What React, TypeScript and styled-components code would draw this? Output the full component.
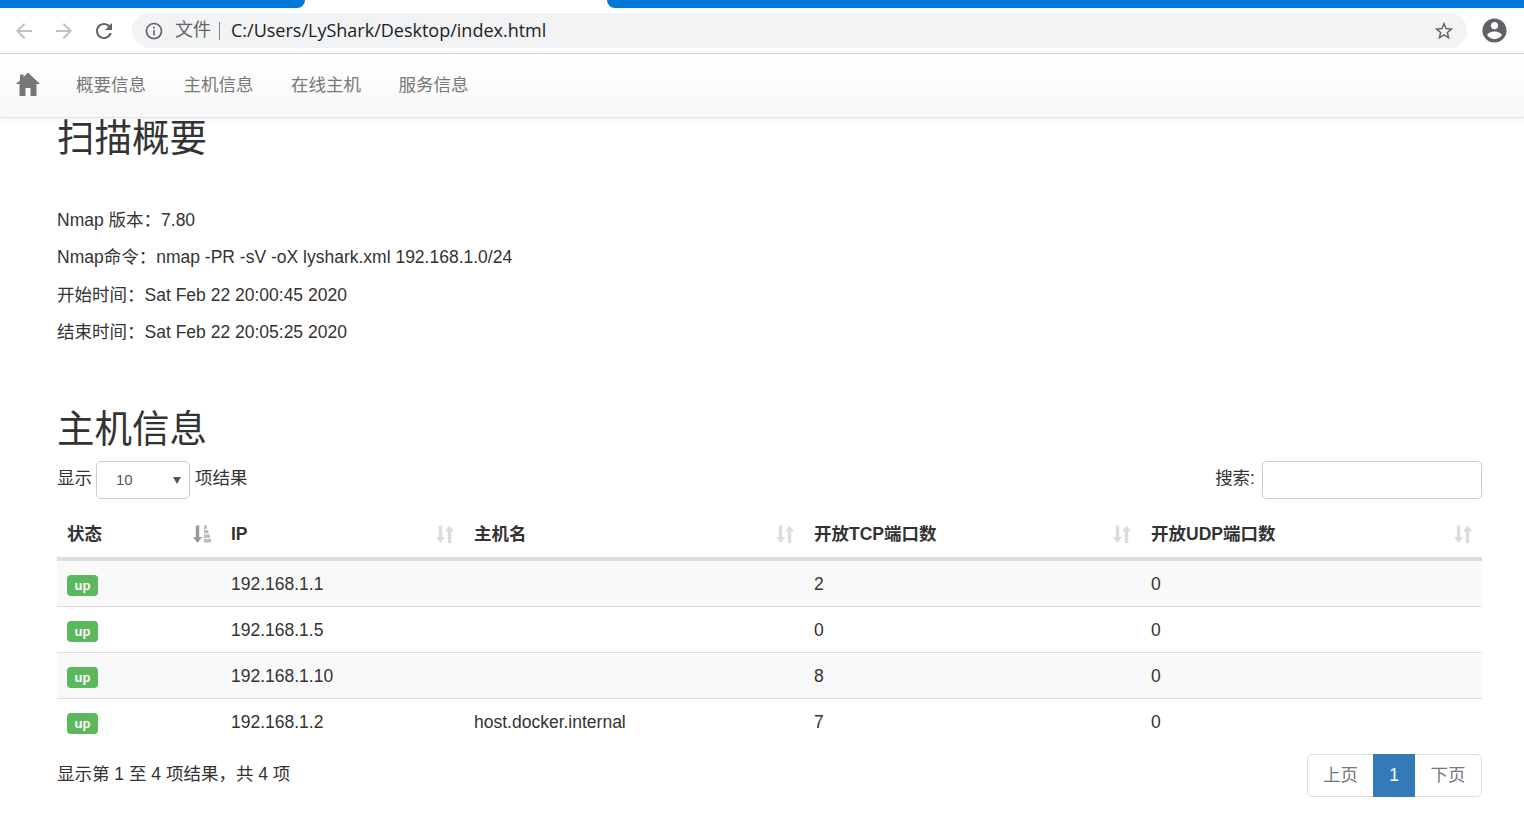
import React from "react";
import styled, { createGlobalStyle } from "styled-components";

const CJK = `"Liberation Sans", "Noto Sans CJK SC", sans-serif`;

const Global = createGlobalStyle`
  html, body { margin: 0; padding: 0; background: #fff; overflow: hidden; }
  body { font-family: ${CJK}; font-size: 17.5px; line-height: 25px; color: #333; }
  * { box-sizing: border-box; }
`;

const Page = styled.div`
  width: 1524px;
  height: 815px;
  overflow: hidden;
`;

const TabStrip = styled.div`
  height: 8px;
  display: flex;
  justify-content: space-between;
`;

const TabEdge = styled.div<{ $side: "left" | "right"; $w: number }>`
  width: ${(p) => p.$w}px;
  background: #0078d7;
  border-bottom-${(p) => (p.$side === "left" ? "right" : "left")}-radius: 8px;
`;

const Toolbar = styled.div`
  height: 46px;
  display: flex;
  align-items: center;
  padding: 0 15px 0 12px;
  border-bottom: 1px solid #dadce0;
  background: #fff;
`;

const ToolIcon = styled.svg<{ $c: string; $mr: number }>`
  width: 24px;
  height: 24px;
  flex: none;
  fill: ${(p) => p.$c};
  margin-right: ${(p) => p.$mr}px;
`;

const AddressBar = styled.div`
  flex: 1;
  height: 35px;
  border-radius: 18px;
  background: #f1f3f4;
  display: flex;
  align-items: center;
  padding: 0 12px 0 12px;
`;

const Scheme = styled.span`
  font-size: 18px;
  color: #5f6368;
  margin-left: 11px;
`;

const Divider = styled.span`
  width: 1px;
  height: 18px;
  background: #80868b;
  margin: 0 11px 0 8px;
`;

const Url = styled.span`
  flex: 1;
  font-family: "Open Sans", "Noto Sans", sans-serif;
  font-size: 18px;
  color: #202124;
`;

const NavBar = styled.nav`
  height: 64px;
  display: flex;
  align-items: center;
  padding-left: 16px;
  background: linear-gradient(to bottom, #fff 0%, #f8f8f8 100%);
  border-bottom: 1px solid #e7e7e7;
  box-shadow: 0 1px 6px rgba(0, 0, 0, 0.07);
`;

const HomeIcon = styled.svg`
  width: 24px;
  height: 24px;
  fill: #777;
  margin: -4px 36px 0 0;
  flex: none;
`;

const NavItem = styled.a`
  color: #777;
  font-size: 17.5px;
  margin-right: 37.5px;
`;

const Content = styled.main`
  padding: 0 42px 0 57px;
`;

const Heading = styled.h2<{ $mt: number; $mb: number }>`
  margin: ${(p) => p.$mt}px 0 ${(p) => p.$mb}px;
  font-size: 37.5px;
  line-height: 41px;
  font-weight: 400;
  color: #333;
`;

const Para = styled.p`
  margin: 0 0 12.5px;
  line-height: 25px;
`;

const Controls = styled.div`
  display: flex;
  justify-content: space-between;
  height: 38px;
  margin-top: 11px;
`;

const ControlLabel = styled.label`
  display: flex;
  align-items: flex-start;
  gap: 4px;
  line-height: 34px;
`;

const SelectBox = styled.div`
  position: relative;
  width: 94px;
  height: 38px;
  margin-right: 1px;
  &::after {
    content: "";
    position: absolute;
    right: 9px;
    top: 16px;
    border-left: 4px solid transparent;
    border-right: 4px solid transparent;
    border-top: 7px solid #555;
  }
`;

const LengthSelect = styled.select`
  appearance: none;
  width: 100%;
  height: 100%;
  border: 1px solid #ccc;
  border-radius: 5px;
  background: #fff;
  padding: 0 0 0 19px;
  font-family: ${CJK};
  font-size: 15px;
  color: #555;
`;

const SearchInput = styled.input`
  width: 220px;
  height: 38px;
  margin-left: 3px;
  border: 1px solid #ccc;
  border-radius: 5px;
  background: #fff;
`;

const Table = styled.table`
  width: 1425px;
  margin-top: 12px;
  border-collapse: separate;
  border-spacing: 0;
  table-layout: fixed;
`;

const Th = styled.th<{ $w: number }>`
  width: ${(p) => p.$w}px;
  height: 50px;
  padding: 1px 10px 0;
  border-bottom: 4px solid #ddd;
  text-align: left;
  font-weight: 700;
  font-size: 17.5px;
`;

const ThInner = styled.div`
  display: flex;
  justify-content: space-between;
  align-items: center;
`;

const SortIcon = styled.svg<{ $c: string }>`
  width: 18px;
  height: 18px;
  margin-top: -1px;
  fill: ${(p) => p.$c};
  flex: none;
`;

const Tr = styled.tr<{ $odd: boolean }>`
  height: 46px;
  background: ${(p) => (p.$odd ? "#f9f9f9" : "#fff")};
`;

const Td = styled.td<{ $last: boolean }>`
  padding: 2px 10px 0;
  font-size: 17.5px;
  border-bottom: 1px solid ${(p) => (p.$last ? "transparent" : "#ddd")};
`;

const Badge = styled.span`
  display: block;
  width: 31px;
  height: 21px;
  margin-top: 2px;
  border-radius: 4px;
  background: #5cb85c;
  color: #fff;
  font-size: 13px;
  font-weight: 700;
  line-height: 21px;
  text-align: center;
`;

const Footer = styled.div`
  display: flex;
  justify-content: space-between;
  align-items: flex-start;
  margin-top: 9px;
`;

const Info = styled.div`
  line-height: 40px;
`;

const Pager = styled.div`
  display: flex;
  height: 43px;
  border: 1px solid #ddd;
  border-radius: 5px;
`;

const PageBtn = styled.a<{ $active?: boolean; $w: number }>`
  width: ${(p) => p.$w}px;
  margin: ${(p) => (p.$active ? "-1px 0" : "0")};
  display: flex;
  align-items: center;
  justify-content: center;
  background: ${(p) => (p.$active ? "#337ab7" : "transparent")};
  color: ${(p) => (p.$active ? "#fff" : "#777")};
`;

const Sort = () => (
  <SortIcon $c="#dcdcdc" viewBox="0 0 18 18">
    <path d="M2.800 0.500h3.400v11.500h2.800L4.500 18 0 12h2.800zM11.800 18h3.400V6.500H18L13.500 0.500 9 6.500h2.800z" />
  </SortIcon>
);

const SortActive = () => (
  <SortIcon $c="#9a9a9a" viewBox="0 0 18 18">
    <path d="M2.800 0.500h3.400v11.500h2.800L4.500 18 0 12h2.800z" />
    <path fill="#bdbdbd" d="M11 0.500h3v3.500h-3zM11 5h4.500v3.500H11zM11 9.500h6v3.500h-6zM11 14h7v3.500h-7z" />
  </SortIcon>
);

const headers = [
  { t: "状态", w: 164, active: true },
  { t: "IP", w: 243 },
  { t: "主机名", w: 340 },
  { t: "开放TCP端口数", w: 337 },
  { t: "开放UDP端口数", w: 341 },
];

const rows = [
  ["192.168.1.1", "", "2", "0"],
  ["192.168.1.5", "", "0", "0"],
  ["192.168.1.10", "", "8", "0"],
  ["192.168.1.2", "host.docker.internal", "7", "0"],
];

export default function App() {
  return (
    <Page>
      <Global />
      <TabStrip>
        <TabEdge $side="left" $w={305} />
        <TabEdge $side="right" $w={917} />
      </TabStrip>
      <Toolbar>
        <ToolIcon $c="#bdc1c6" $mr={16} viewBox="0 0 24 24">
          <path d="M20 11H7.830l5.590-5.590L12 4l-8 8 8 8 1.410-1.410L7.830 13H20v-2z" />
        </ToolIcon>
        <ToolIcon $c="#bdc1c6" $mr={16} viewBox="0 0 24 24">
          <path d="M12 4l-1.410 1.410L16.170 11H4v2h12.170l-5.580 5.590L12 20l8-8z" />
        </ToolIcon>
        <ToolIcon $c="#5f6368" $mr={16} viewBox="0 0 24 24">
          <path d="M17.650 6.350C16.200 4.900 14.210 4 12 4c-4.420 0-7.990 3.580-7.990 8s3.570 8 7.990 8c3.730 0 6.840-2.550 7.730-6h-2.080c-.82 2.330-3.040 4-5.650 4-3.310 0-6-2.690-6-6s2.690-6 6-6c1.660 0 3.140.69 4.220 1.780L13 11h7V4l-2.350 2.350z" />
        </ToolIcon>
        <AddressBar>
          <ToolIcon $c="#5f6368" $mr={0} viewBox="0 0 24 24" style={{ width: 20, height: 20 }}>
            <path d="M11 7h2v2h-2zm0 4h2v6h-2zm1-9C6.480 2 2 6.480 2 12s4.480 10 10 10 10-4.480 10-10S17.520 2 12 2zm0 18c-4.410 0-8-3.590-8-8s3.590-8 8-8 8 3.590 8 8-3.590 8-8 8z" />
          </ToolIcon>
          <Scheme>文件</Scheme>
          <Divider />
          <Url>C:/Users/LyShark/Desktop/index.html</Url>
          <ToolIcon $c="#5f6368" $mr={0} viewBox="0 0 24 24" style={{ width: 22, height: 22 }}>
            <path d="M22 9.240l-7.190-.62L12 2 9.190 8.630 2 9.240l5.460 4.730L5.820 21 12 17.270 18.180 21l-1.630-7.030L22 9.240zM12 15.400l-3.760 2.270 1-4.280-3.320-2.880 4.380-.38L12 6.100l1.710 4.040 4.380.38-3.320 2.880 1 4.280L12 15.400z" />
          </ToolIcon>
        </AddressBar>
        <ToolIcon $c="#5f6368" $mr={0} viewBox="0 0 24 24" style={{ width: 29, height: 29, marginLeft: 13 }}>
          <path d="M12 2C6.480 2 2 6.480 2 12s4.480 10 10 10 10-4.480 10-10S17.520 2 12 2zm0 3c1.660 0 3 1.340 3 3s-1.340 3-3 3-3-1.340-3-3 1.340-3 3-3zm0 14.200c-2.500 0-4.710-1.280-6-3.220.03-1.990 4-3.080 6-3.080 1.990 0 5.970 1.090 6 3.080-1.290 1.940-3.500 3.220-6 3.220z" />
        </ToolIcon>
      </Toolbar>
      <NavBar>
        <HomeIcon viewBox="0 0 24 24">
          <path d="M12 0.500 24 12h-3.500v12h-6v-8h-5v8h-6V12H0L4 8.200V2.500h3.500v2.400z" />
        </HomeIcon>
        <NavItem>概要信息</NavItem>
        <NavItem>主机信息</NavItem>
        <NavItem>在线主机</NavItem>
        <NavItem>服务信息</NavItem>
      </NavBar>
      <Content>
        <Heading $mt={0} $mb={48.5}>扫描概要</Heading>
        <Para>Nmap 版本：7.80</Para>
        <Para>Nmap命令：nmap -PR -sV -oX lyshark.xml 192.168.1.0/24</Para>
        <Para>开始时间：Sat Feb 22 20:00:45 2020</Para>
        <Para>结束时间：Sat Feb 22 20:05:25 2020</Para>
        <Heading $mt={63.5} $mb={0}>主机信息</Heading>
        <Controls>
          <ControlLabel>
            显示
            <SelectBox>
              <LengthSelect defaultValue="10">
                <option value="10">10</option>
              </LengthSelect>
            </SelectBox>
            项结果
          </ControlLabel>
          <ControlLabel>
            搜索:
            <SearchInput />
          </ControlLabel>
        </Controls>
        <Table>
          <thead>
            <tr>
              {headers.map((h) => (
                <Th key={h.t} $w={h.w}>
                  <ThInner>
                    {h.t}
                    {h.active ? <SortActive /> : <Sort />}
                  </ThInner>
                </Th>
              ))}
            </tr>
          </thead>
          <tbody>
            {rows.map((r, i) => (
              <Tr key={r[0]} $odd={i % 2 === 0}>
                <Td $last={i === rows.length - 1}>
                  <Badge>up</Badge>
                </Td>
                {r.map((c, j) => (
                  <Td key={j} $last={i === rows.length - 1}>{c}</Td>
                ))}
              </Tr>
            ))}
          </tbody>
        </Table>
        <Footer>
          <Info>显示第 1 至 4 项结果，共 4 项</Info>
          <Pager>
            <PageBtn $w={65}>上页</PageBtn>
            <PageBtn $w={42} $active>1</PageBtn>
            <PageBtn $w={66}>下页</PageBtn>
          </Pager>
        </Footer>
      </Content>
    </Page>
  );
}
